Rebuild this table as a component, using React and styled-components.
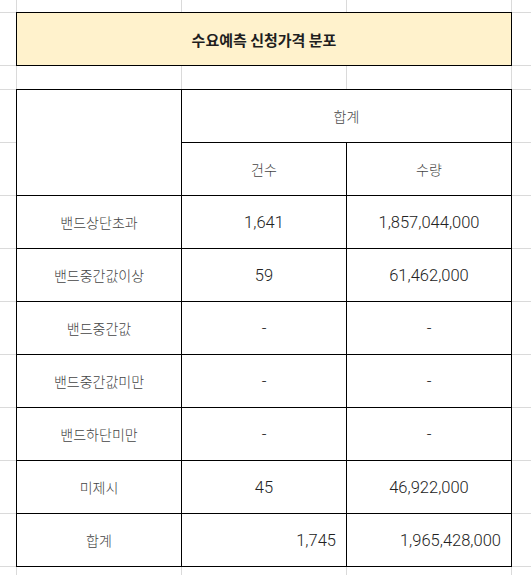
import React from "react";
import styled, { createGlobalStyle } from "styled-components";

const GlobalStyle = createGlobalStyle`
  html, body {
    margin: 0;
    padding: 0;
    background: #fff;
    overflow: hidden;
  }
  body {
    font-family: Roboto, "Noto Sans CJK KR", sans-serif;
    color: #333;
  }
`;

const Sheet = styled.div`
  display: grid;
  grid-template-columns: 17px 165px 165px 165px 1fr;
  grid-template-rows: 13px 53px 24px repeat(9, 53px) 1fr;
  width: 100vw;
  height: 100vh;
`;

const GridCell = styled.div`
  grid-row: ${(p) => p.$row};
  grid-column: ${(p) => p.$col};
  border-right: ${(p) => (p.$lastCol ? "none" : "1px solid #dadada")};
  border-bottom: ${(p) => (p.$lastRow ? "none" : "1px solid #dadada")};
`;

const Title = styled.div`
  grid-row: 2;
  grid-column: 2 / span 3;
  margin: -1px 0 0 -1px;
  border: 1px solid #000;
  background: #fff2cc;
  display: flex;
  align-items: center;
  justify-content: center;
  font-family: "Noto Sans CJK KR", sans-serif;
  font-size: 15px;
  font-weight: 700;
  color: #1f1f1f;
  position: relative;
`;

const Cell = styled.div`
  grid-row: ${(p) => p.$row} / span ${(p) => p.$rowSpan || 1};
  grid-column: ${(p) => p.$col} / span ${(p) => p.$span || 1};
  margin: -1px 0 0 -1px;
  border: 1px solid #000;
  background: #fff;
  display: flex;
  align-items: center;
  justify-content: ${(p) => (p.$right ? "flex-end" : "center")};
  padding-right: ${(p) => (p.$right ? "10px" : "0")};
  position: relative;
`;

const Label = styled.span`
  font-family: "Noto Sans CJK KR", sans-serif;
  font-size: 14px;
  font-weight: 300;
  color: #444;
`;

const Num = styled.span`
  font-family: Roboto, "Liberation Sans", sans-serif;
  font-size: 16.5px;
  font-weight: 300;
  color: #222;
`;

const rows = [
  ["밴드상단초과", "1,641", "1,857,044,000"],
  ["밴드중간값이상", "59", "61,462,000"],
  ["밴드중간값", "-", "-"],
  ["밴드중간값미만", "-", "-"],
  ["밴드하단미만", "-", "-"],
  ["미제시", "45", "46,922,000"],
];

function isUsed(r, c) {
  if (c < 2 || c > 4) return false;
  if (r === 2) return true;
  return r >= 4 && r <= 12;
}

export default function App() {
  const grid = [];
  for (let r = 1; r <= 13; r++) {
    for (let c = 1; c <= 5; c++) {
      if (isUsed(r, c)) continue;
      grid.push(
        <GridCell key={`${r}-${c}`} $row={r} $col={c} $lastCol={c === 5} $lastRow={r === 13} />
      );
    }
  }

  return (
    <>
      <GlobalStyle />
      <Sheet>
        {grid}
        <Title>수요예측 신청가격 분포</Title>

        <Cell $row={4} $col={2} $rowSpan={2} />
        <Cell $row={4} $col={3} $span={2}>
          <Label>합계</Label>
        </Cell>
        <Cell $row={5} $col={3}>
          <Label>건수</Label>
        </Cell>
        <Cell $row={5} $col={4}>
          <Label>수량</Label>
        </Cell>

        {rows.map((row, i) => (
          <React.Fragment key={row[0]}>
            <Cell $row={6 + i} $col={2}>
              <Label>{row[0]}</Label>
            </Cell>
            <Cell $row={6 + i} $col={3}>
              <Num>{row[1]}</Num>
            </Cell>
            <Cell $row={6 + i} $col={4}>
              <Num>{row[2]}</Num>
            </Cell>
          </React.Fragment>
        ))}

        <Cell $row={12} $col={2}>
          <Label>합계</Label>
        </Cell>
        <Cell $row={12} $col={3} $right>
          <Num>1,745</Num>
        </Cell>
        <Cell $row={12} $col={4} $right>
          <Num>1,965,428,000</Num>
        </Cell>
      </Sheet>
    </>
  );
}
